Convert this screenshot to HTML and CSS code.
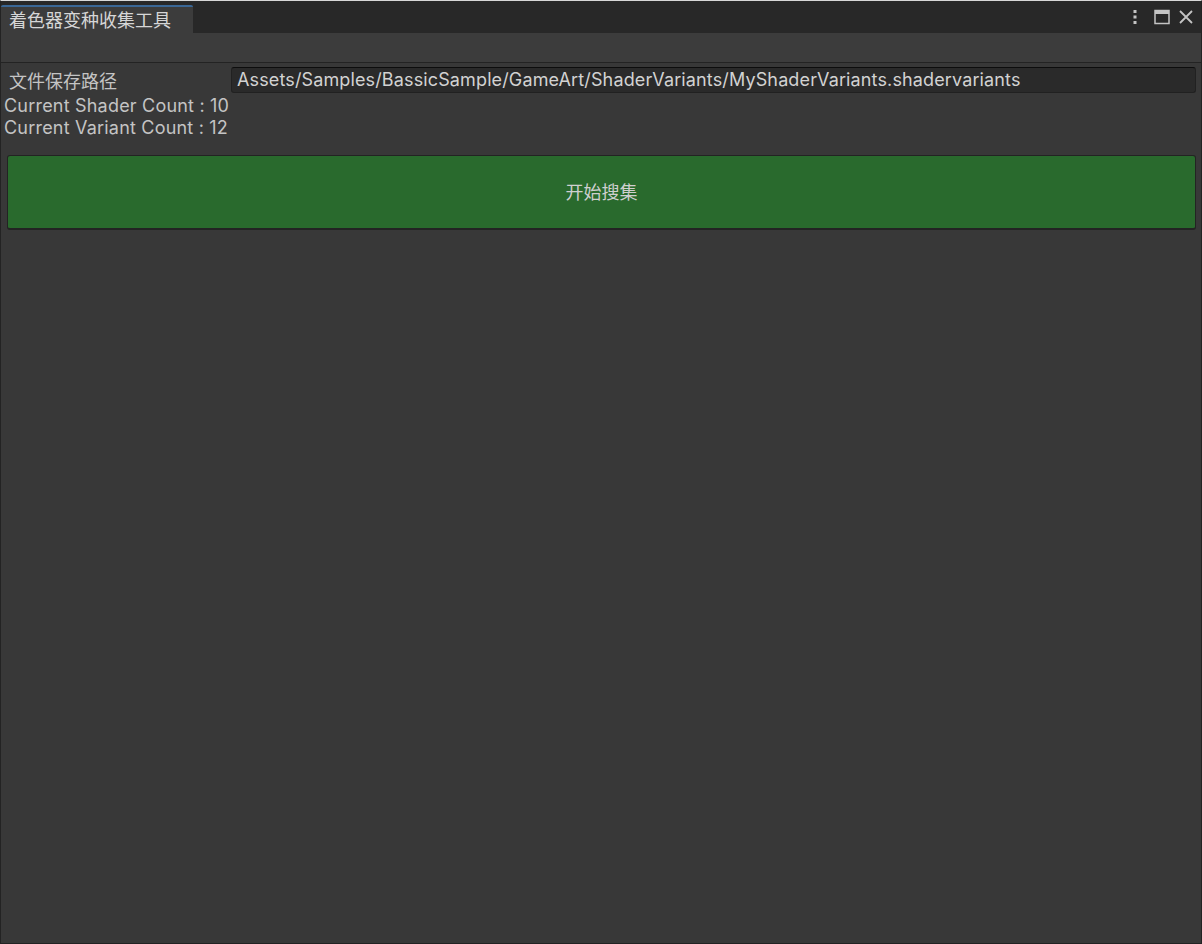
FILE: index.html
```html
<!DOCTYPE html>
<html lang="zh-CN">
<head>
    <meta charset="UTF-8">
    <title>着色器变种收集工具</title>
    <link rel="stylesheet" href="styles.css">
</head>
<body>
    <div class="window">
        <div class="tab-bar">
            <div class="tab">着色器变种收集工具</div>
            <div class="tab-actions">
                <svg class="icon" width="6" height="16" viewBox="0 0 6 16">
                    <rect x="1.5" y="1" width="3" height="3" fill="#c4c4c4"/>
                    <rect x="1.5" y="6.5" width="3" height="3" fill="#c4c4c4"/>
                    <rect x="1.5" y="12" width="3" height="3" fill="#c4c4c4"/>
                </svg>
                <svg class="icon" width="16" height="16" viewBox="0 0 16 16">
                    <rect x="1" y="1.5" width="14" height="13" fill="none" stroke="#c4c4c4" stroke-width="1.5"/>
                    <rect x="1" y="1" width="14" height="4" fill="#c4c4c4"/>
                </svg>
                <svg class="icon" width="16" height="16" viewBox="0 0 16 16">
                    <path d="M2 2 L14 14 M14 2 L2 14" stroke="#c4c4c4" stroke-width="1.8"/>
                </svg>
            </div>
        </div>
        <div class="toolbar"></div>
        <div class="content">
            <div class="field-row">
                <label class="field-label">文件保存路径</label>
                <div class="text-field">Assets/Samples/BassicSample/GameArt/ShaderVariants/MyShaderVariants.shadervariants</div>
            </div>
            <div class="info-group">
                <div class="info">Current Shader Count : 10</div>
                <div class="info">Current Variant Count : 12</div>
            </div>
            <button class="collect-button">开始搜集</button>
        </div>
    </div>
</body>
</html>
```

FILE: styles.css
```css
body {
    margin: 0;
    background: #383838;
    font-family: Inter, "Noto Sans CJK SC", sans-serif;
    color: #c4c4c4;
}

.window {
    box-sizing: border-box;
    height: 944px;
    display: flex;
    flex-direction: column;
    border-top: 1px solid #d8d8d8;
    border-left: 1px solid #232323;
    border-right: 1px solid #232323;
    border-bottom: 1px solid #232323;
}

.tab-bar {
    height: 32px;
    display: flex;
    align-items: flex-end;
    justify-content: space-between;
    background: #282828;
}

.tab {
    box-sizing: border-box;
    width: 192px;
    height: 28px;
    padding: 4px 0 0 8px;
    background: #3c3c3c;
    border-top: 2px solid #3a6796;
    border-radius: 2px 2px 0 0;
    font-size: 18px;
    line-height: 20px;
    color: #d6d6d6;
}

.tab-actions {
    align-self: flex-start;
    display: flex;
    align-items: center;
    padding: 8px 7px 0 0;
}

.tab-actions .icon + .icon {
    margin-left: 16px;
}

.tab-actions .icon:last-child {
    margin-left: 8px;
}

.icon {
    display: block;
}

.toolbar {
    height: 29px;
    background: #3c3c3c;
    border-bottom: 1px solid #232323;
}

.content {
    flex: 1;
    display: flex;
    flex-direction: column;
    padding: 4px 5px 0 2px;
}

.field-row {
    display: flex;
    align-items: center;
    height: 26px;
}

.field-label {
    width: 222px;
    padding-left: 6px;
    font-size: 18px;
}

.text-field {
    flex: 1;
    box-sizing: border-box;
    height: 26px;
    padding: 0 5px;
    background: #2a2a2a;
    border: 1px solid #212121;
    border-top-color: #0d0d0d;
    border-radius: 3px;
    font-size: 18px;
    letter-spacing: 0.13px;
    line-height: 24px;
    color: #d2d2d2;
    white-space: nowrap;
}

.info-group {
    padding-top: 2px;
}

.info {
    padding-left: 1px;
    font-size: 18px;
    letter-spacing: 0.2px;
    line-height: 22px;
}

.collect-button {
    margin: 16px 0 0 4px;
    height: 75px;
    padding-bottom: 4px;
    background: #296a2d;
    border: 1px solid #232323;
    border-bottom-width: 2px;
    border-radius: 3px;
    font-family: inherit;
    font-size: 18px;
    color: #cfcfcf;
}
```
